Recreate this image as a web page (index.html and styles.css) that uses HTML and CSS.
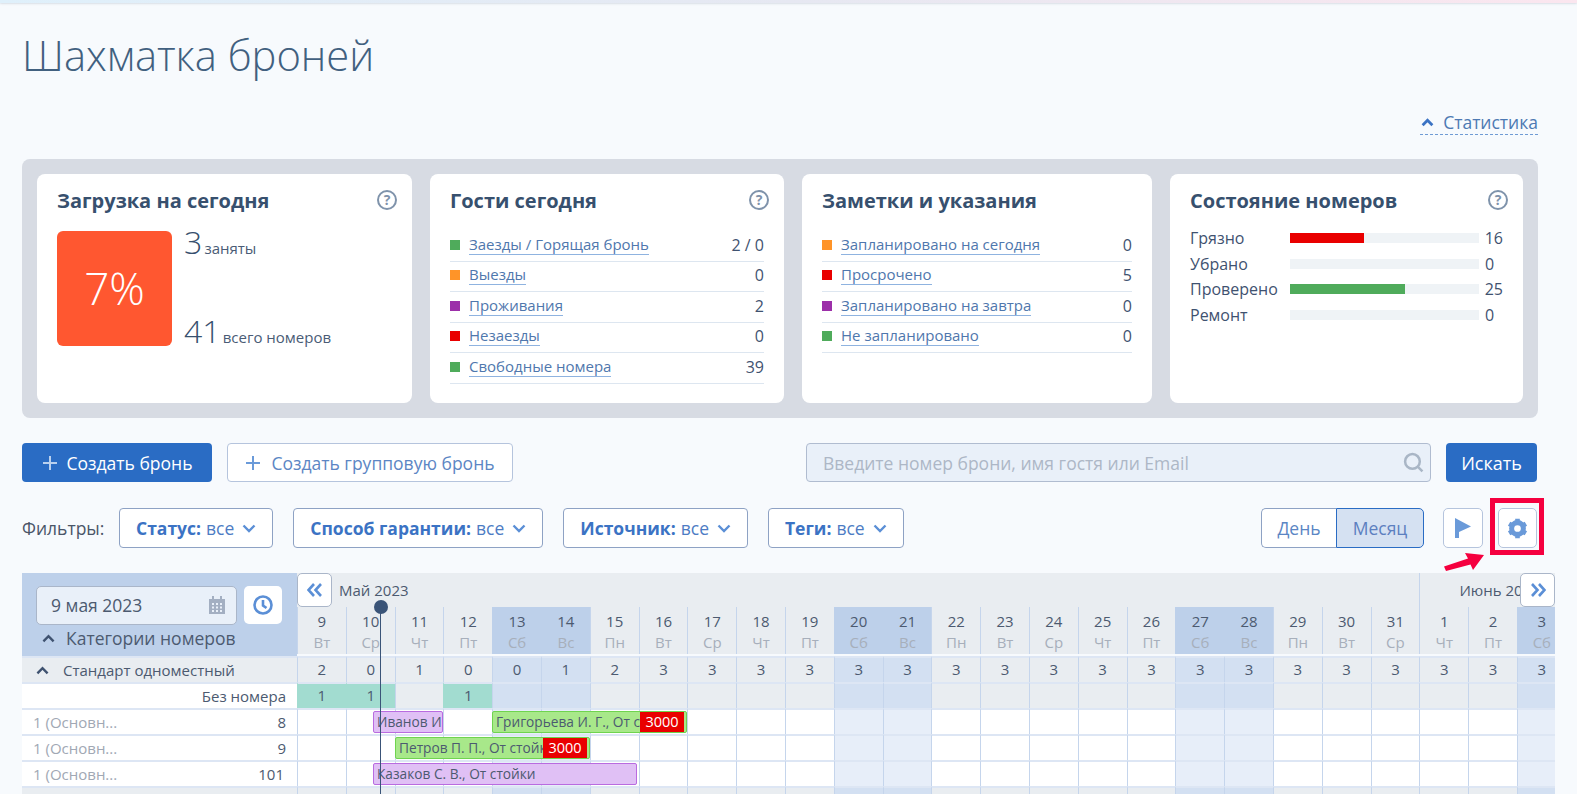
FILE: index.html
```html
<!DOCTYPE html>
<html lang="ru">
<head>
    <meta charset="UTF-8">
    <title>Шахматка броней</title>
    <link rel="stylesheet" href="styles.css">
</head>
<body>
    <div class="top-strip"></div>
    <div class="page">
        <h1 class="title">Шахматка броней</h1>

        <div class="stats-toggle">
            <a class="stats-link">
                <svg class="chev-up" viewBox="0 0 12 8"><polyline points="1.5,6.5 6,2 10.5,6.5"/></svg>
                Статистика
            </a>
        </div>

        <div class="stats">
            <section class="card card-load">
                <h3>Загрузка на сегодня <span class="help">?</span></h3>
                <div class="load">
                    <div class="load-box">7%</div>
                    <div class="load-nums">
                        <div><span class="big">3</span> <span class="small">заняты</span></div>
                        <div><span class="big">41</span> <span class="small">всего номеров</span></div>
                    </div>
                </div>
            </section>

            <section class="card card-guests">
                <h3>Гости сегодня <span class="help">?</span></h3>
                <ul class="list">
                    <li><i class="sq green"></i><a>Заезды / Горящая бронь</a><b>2 / 0</b></li>
                    <li><i class="sq orange"></i><a>Выезды</a><b>0</b></li>
                    <li><i class="sq purple"></i><a>Проживания</a><b>2</b></li>
                    <li><i class="sq red"></i><a>Незаезды</a><b>0</b></li>
                    <li><i class="sq green"></i><a>Свободные номера</a><b>39</b></li>
                </ul>
            </section>

            <section class="card card-notes">
                <h3>Заметки и указания</h3>
                <ul class="list">
                    <li><i class="sq orange"></i><a>Запланировано на сегодня</a><b>0</b></li>
                    <li><i class="sq red"></i><a>Просрочено</a><b>5</b></li>
                    <li><i class="sq purple"></i><a>Запланировано на завтра</a><b>0</b></li>
                    <li><i class="sq green"></i><a>Не запланировано</a><b>0</b></li>
                </ul>
            </section>

            <section class="card card-rooms">
                <h3>Состояние номеров <span class="help">?</span></h3>
                <div class="states">
                    <div class="state"><span class="state-name">Грязно</span><div class="bar"><div class="fill red" style="width: 39%"></div></div><span class="state-val">16</span></div>
                    <div class="state"><span class="state-name">Убрано</span><div class="bar"></div><span class="state-val">0</span></div>
                    <div class="state"><span class="state-name">Проверено</span><div class="bar"><div class="fill green" style="width: 61%"></div></div><span class="state-val">25</span></div>
                    <div class="state"><span class="state-name">Ремонт</span><div class="bar"></div><span class="state-val">0</span></div>
                </div>
            </section>
        </div>

        <div class="actions">
            <button class="btn btn-primary btn-create">
                <svg class="plus" viewBox="0 0 16 16"><path d="M8 1v14M1 8h14"/></svg>
                Создать бронь
            </button>
            <button class="btn btn-outline">
                <svg class="plus" viewBox="0 0 16 16"><path d="M8 1v14M1 8h14"/></svg>
                Создать групповую бронь
            </button>
            <div class="search">
                <span class="search-text">Введите номер брони, имя гостя или Email</span>
                <svg class="search-icon" viewBox="0 0 20 20"><circle cx="9" cy="9" r="7"/><path d="M14 14l4.5 4.5"/></svg>
            </div>
            <button class="btn btn-primary btn-find">Искать</button>
        </div>

        <div class="filters">
            <span class="filters-label">Фильтры:</span>
            <button class="filter"><b>Статус:</b> все <svg class="chev-down" viewBox="0 0 14 9"><polyline points="1.5,1.5 7,7 12.5,1.5"/></svg></button>
            <button class="filter"><b>Способ гарантии:</b> все <svg class="chev-down" viewBox="0 0 14 9"><polyline points="1.5,1.5 7,7 12.5,1.5"/></svg></button>
            <button class="filter"><b>Источник:</b> все <svg class="chev-down" viewBox="0 0 14 9"><polyline points="1.5,1.5 7,7 12.5,1.5"/></svg></button>
            <button class="filter"><b>Теги:</b> все <svg class="chev-down" viewBox="0 0 14 9"><polyline points="1.5,1.5 7,7 12.5,1.5"/></svg></button>

            <div class="filters-right">
                <div class="switch">
                    <span class="switch-item">День</span>
                    <span class="switch-item active">Месяц</span>
                </div>
                <button class="icon-btn flag-btn">
                    <svg viewBox="0 0 16 20" width="16" height="20"><path class="flag" d="M0 0L16 8.5L4 14V20H0Z"/></svg>
                </button>
                <button class="icon-btn gear-btn">
                    <svg viewBox="0 0 20 20" width="21" height="21">
                        <circle class="gear-ring" cx="10" cy="10" r="5.6"/>
                        <path class="gear-teeth" d="M10 0.8v3.5M10 15.7v3.500M2 5.400l3 1.750M15 12.850l3 1.750M2 14.600l3-1.750M15 7.150l3-1.750"/>
                    </svg>
                </button>
                <div class="highlight-box"></div>
                <svg class="arrow" viewBox="0 0 40 18" width="40" height="18"><path d="M0 13.5L24 5.5L21 0L40 2L29 17L26.5 11.5L2 18Z"/></svg>
            </div>
        </div>

        <div class="board">
            <div class="board-head">
                <div class="head-left">
                    <div class="date-row">
                        <div class="date-input">
                            9 мая 2023
                            <svg class="cal" viewBox="0 0 18 18" width="18" height="18">
                                <path d="M1 3h16v15H1zM4 0h2v4H4zM12 0h2v4h-2z"/>
                                <path class="cal-holes" d="M4 7h2v2H4zM8 7h2v2H8zM12 7h2v2h-2zM4 10.500h2v2H4zM8 10.500h2v2H8zM12 10.500h2v2h-2zM4 14h2v2H4zM8 14h2v2H8zM12 14h2v2h-2z"/>
                            </svg>
                        </div>
                        <button class="clock-btn">
                            <svg viewBox="0 0 20 20" width="20" height="20"><circle cx="10" cy="10" r="8.500"/><path d="M10 5v5.500l3.500 2.500"/></svg>
                        </button>
                    </div>
                    <div class="cat-title">
                        <svg class="chev-dark" viewBox="0 0 14 9"><polyline points="1.5,7.500 7,2 12.500,7.500"/></svg>
                        Категории номеров
                    </div>
                </div>
                <div class="head-right">
                    <div class="months">
                        <div class="month month-may">
                            <button class="nav-btn">
                                <svg viewBox="0 0 16 14" width="16" height="14"><path d="M7 1L1.500 7L7 13M14 1L8.500 7L14 13"/></svg>
                            </button>
                            Май 2023
                        </div>
                        <div class="month month-june">Июнь 2023</div>
                    </div>
                    <div class="row days">
                        <div class="day">9<small>Вт</small></div>
                        <div class="day">10<small>Ср</small></div>
                        <div class="day">11<small>Чт</small></div>
                        <div class="day">12<small>Пт</small></div>
                        <div class="day we">13<small>Сб</small></div>
                        <div class="day we">14<small>Вс</small></div>
                        <div class="day">15<small>Пн</small></div>
                        <div class="day">16<small>Вт</small></div>
                        <div class="day">17<small>Ср</small></div>
                        <div class="day">18<small>Чт</small></div>
                        <div class="day">19<small>Пт</small></div>
                        <div class="day we">20<small>Сб</small></div>
                        <div class="day we">21<small>Вс</small></div>
                        <div class="day">22<small>Пн</small></div>
                        <div class="day">23<small>Вт</small></div>
                        <div class="day">24<small>Ср</small></div>
                        <div class="day">25<small>Чт</small></div>
                        <div class="day">26<small>Пт</small></div>
                        <div class="day we">27<small>Сб</small></div>
                        <div class="day we">28<small>Вс</small></div>
                        <div class="day">29<small>Пн</small></div>
                        <div class="day">30<small>Вт</small></div>
                        <div class="day">31<small>Ср</small></div>
                        <div class="day">1<small>Чт</small></div>
                        <div class="day">2<small>Пт</small></div>
                        <div class="day we">3<small>Сб</small></div>
                    </div>
                </div>
            </div>

            <div class="row grey">
                <div class="side side-cat">
                    <svg class="chev-dark" viewBox="0 0 14 9"><polyline points="1.500,7.500 7,2 12.500,7.500"/></svg>
                    Стандарт одноместный
                </div>
                <div class="cell">2</div><div class="cell">0</div><div class="cell">1</div><div class="cell">0</div>
                <div class="cell we">0</div><div class="cell we">1</div><div class="cell">2</div><div class="cell">3</div>
                <div class="cell">3</div><div class="cell">3</div><div class="cell">3</div><div class="cell we">3</div>
                <div class="cell we">3</div><div class="cell">3</div><div class="cell">3</div><div class="cell">3</div>
                <div class="cell">3</div><div class="cell">3</div><div class="cell we">3</div><div class="cell we">3</div>
                <div class="cell">3</div><div class="cell">3</div><div class="cell">3</div><div class="cell">3</div>
                <div class="cell">3</div><div class="cell we">3</div>
            </div>

            <div class="row grey">
                <div class="side side-none">Без номера</div>
                <div class="cell free">1</div><div class="cell free">1</div><div class="cell"></div><div class="cell free">1</div>
                <div class="cell we"></div><div class="cell we"></div><div class="cell"></div><div class="cell"></div>
                <div class="cell"></div><div class="cell"></div><div class="cell"></div><div class="cell we"></div>
                <div class="cell we"></div><div class="cell"></div><div class="cell"></div><div class="cell"></div>
                <div class="cell"></div><div class="cell"></div><div class="cell we"></div><div class="cell we"></div>
                <div class="cell"></div><div class="cell"></div><div class="cell"></div><div class="cell"></div>
                <div class="cell"></div><div class="cell we"></div>
            </div>

            <div class="row room">
                <div class="side side-room"><span class="room-type">1 (Основн...</span><span>8</span></div>
                <div class="cell"></div><div class="cell"></div><div class="cell"></div><div class="cell"></div>
                <div class="cell we"></div><div class="cell we"></div><div class="cell"></div><div class="cell"></div>
                <div class="cell"></div><div class="cell"></div><div class="cell"></div><div class="cell we"></div>
                <div class="cell we"></div><div class="cell"></div><div class="cell"></div><div class="cell"></div>
                <div class="cell"></div><div class="cell"></div><div class="cell we"></div><div class="cell we"></div>
                <div class="cell"></div><div class="cell"></div><div class="cell"></div><div class="cell"></div>
                <div class="cell"></div><div class="cell we"></div>
                <div class="booking purple-b b-ivanov"><span class="guest">Иванов И. И., От стойки</span></div>
                <div class="booking green-b b-grig"><span class="guest">Григорьева И. Г., От стойки</span><span class="debt">3000</span></div>
            </div>

            <div class="row room">
                <div class="side side-room"><span class="room-type">1 (Основн...</span><span>9</span></div>
                <div class="cell"></div><div class="cell"></div><div class="cell"></div><div class="cell"></div>
                <div class="cell we"></div><div class="cell we"></div><div class="cell"></div><div class="cell"></div>
                <div class="cell"></div><div class="cell"></div><div class="cell"></div><div class="cell we"></div>
                <div class="cell we"></div><div class="cell"></div><div class="cell"></div><div class="cell"></div>
                <div class="cell"></div><div class="cell"></div><div class="cell we"></div><div class="cell we"></div>
                <div class="cell"></div><div class="cell"></div><div class="cell"></div><div class="cell"></div>
                <div class="cell"></div><div class="cell we"></div>
                <div class="booking green-b b-petrov"><span class="guest">Петров П. П., От стойки</span><span class="debt">3000</span></div>
            </div>

            <div class="row room">
                <div class="side side-room"><span class="room-type">1 (Основн...</span><span class="room-wide">101</span></div>
                <div class="cell"></div><div class="cell"></div><div class="cell"></div><div class="cell"></div>
                <div class="cell we"></div><div class="cell we"></div><div class="cell"></div><div class="cell"></div>
                <div class="cell"></div><div class="cell"></div><div class="cell"></div><div class="cell we"></div>
                <div class="cell we"></div><div class="cell"></div><div class="cell"></div><div class="cell"></div>
                <div class="cell"></div><div class="cell"></div><div class="cell we"></div><div class="cell we"></div>
                <div class="cell"></div><div class="cell"></div><div class="cell"></div><div class="cell"></div>
                <div class="cell"></div><div class="cell we"></div>
                <div class="booking purple-b b-kazakov"><span class="guest">Казаков С. В., От стойки</span></div>
            </div>

            <div class="row grey">
                <div class="side"></div>
                <div class="cell"></div><div class="cell"></div><div class="cell"></div><div class="cell"></div>
                <div class="cell we"></div><div class="cell we"></div><div class="cell"></div><div class="cell"></div>
                <div class="cell"></div><div class="cell"></div><div class="cell"></div><div class="cell we"></div>
                <div class="cell we"></div><div class="cell"></div><div class="cell"></div><div class="cell"></div>
                <div class="cell"></div><div class="cell"></div><div class="cell we"></div><div class="cell we"></div>
                <div class="cell"></div><div class="cell"></div><div class="cell"></div><div class="cell"></div>
                <div class="cell"></div><div class="cell we"></div>
            </div>

            <button class="nav-btn nav-next">
                <svg viewBox="0 0 16 14" width="16" height="14"><path d="M2 1L7.500 7L2 13M9 1L14.500 7L9 13"/></svg>
            </button>
            <div class="now-line"></div>
        </div>
    </div>
</body>
</html>
```

FILE: styles.css
```css
html, body {
    margin: 0;
    height: 794px;
    overflow: hidden;
}

body {
    font-family: "Open Sans", sans-serif;
    background: #f7fafd;
    color: #3f5270;
}

.top-strip {
    height: 3px;
    background: linear-gradient(90deg, #dff0fb, #e6e8f2 50%, #fbe6ef);
    box-shadow: 0 1px 2px rgba(60, 80, 110, 0.15);
}

.page {
    padding: 0 39px 0 22px;
}

button {
    font-family: inherit;
    cursor: pointer;
}

.title {
    margin: 0;
    padding-top: 24px;
    height: 58px;
    font-size: 41.700px;
    line-height: 56px;
    font-weight: 300;
    color: #41607f;
}

.stats-toggle {
    display: flex;
    justify-content: flex-end;
    margin-top: 25px;
    height: 49px;
}

.stats-link {
    display: flex;
    align-items: center;
    gap: 9px;
    height: 24px;
    border-bottom: 1px dashed #6f9bd4;
    font-size: 17.500px;
    color: #4d79b3;
}

.chev-up {
    width: 13px;
    height: 9px;
    margin-left: 1px;
}

.chev-up polyline {
    fill: none;
    stroke: #3b73c4;
    stroke-width: 2.600;
}

/* карточки статистики */
.stats {
    display: grid;
    grid-template-columns: 375px 354px 350px 353px;
    gap: 18px;
    height: 229px;
    padding: 15px;
    background: #d7dbe3;
    border-radius: 8px;
}

.card {
    position: relative;
    padding: 0 20px;
    background: #fff;
    border-radius: 8px;
}

.card h3 {
    margin: 0;
    padding-top: 13px;
    height: 27px;
    font-size: 20px;
    line-height: 27px;
    font-weight: 700;
    color: #37506e;
}

.help {
    position: absolute;
    top: 16px;
    right: 15px;
    box-sizing: border-box;
    width: 20px;
    height: 20px;
    border: 2px solid #7f93ab;
    border-radius: 50%;
    font-size: 14px;
    line-height: 16px;
    text-align: center;
    font-weight: 700;
    color: #7f93ab;
}

.load {
    display: flex;
    gap: 13px;
    margin-top: 17px;
}

.load-box {
    width: 115px;
    height: 115px;
    border-radius: 6px;
    background: #ff5730;
    color: #fff;
    font-size: 44px;
    font-weight: 300;
    line-height: 115px;
    text-align: center;
}

.load-nums {
    display: flex;
    flex-direction: column;
    justify-content: space-between;
    height: 115px;
    margin-top: -4px;
    margin-left: -1px;
}

.load-nums div:last-child {
    margin-bottom: -6px;
}

.big {
    font-size: 32px;
    line-height: 30px;
    font-weight: 300;
    color: #37506e;
}

.small {
    margin-left: -2px;
    font-size: 15px;
    color: #4a5c76;
}

.list {
    margin: 17px 0 0;
    padding: 0;
    list-style: none;
}

.list li {
    display: flex;
    align-items: center;
    box-sizing: border-box;
    height: 30.500px;
    padding-bottom: 2px;
    border-bottom: 1px solid #dde6f0;
}

.sq {
    width: 10px;
    height: 10px;
    margin-right: 9px;
}

.green { background: #4fab5b; }
.orange { background: #ff9428; }
.purple { background: #9c2fa9; }
.red { background: #e90000; }

.list a {
    font-size: 15px;
    line-height: 19px;
    color: #4f77ad;
    border-bottom: 1px solid #8fb3e0;
}

.list b {
    margin-left: auto;
    font-size: 16px;
    font-weight: 400;
    color: #3f5270;
}

.states {
    margin-top: 11px;
}

.state {
    display: flex;
    align-items: center;
    height: 25.700px;
}

.state-name {
    width: 100px;
    font-size: 16px;
    color: #3f5270;
}

.bar {
    width: 189px;
    height: 10px;
    background: #eff3f6;
}

.fill {
    height: 10px;
}

.state-val {
    margin-left: 6px;
    font-size: 16px;
}

/* кнопки и поиск */
.actions {
    display: flex;
    margin-top: 25px;
    height: 39px;
}

.btn {
    display: flex;
    align-items: center;
    justify-content: center;
    height: 39px;
    border-radius: 4px;
    font-size: 17.500px;
}

.btn-primary {
    background: #2a6cc4;
    border: 0;
    color: #fff;
}

.btn-create {
    width: 190px;
    gap: 9px;
    padding-left: 6px;
}

.btn-create .plus {
    stroke: #b9d0ee;
}

.btn-outline {
    width: 286px;
    margin-left: 15px;
    gap: 10px;
    padding-left: 6px;
    background: #fff;
    border: 1px solid #b5c4dd;
    color: #5c86c4;
}

.plus {
    width: 16px;
    height: 16px;
    fill: none;
    stroke: #6a9ad9;
    stroke-width: 2;
}

.search {
    display: flex;
    align-items: center;
    justify-content: space-between;
    box-sizing: border-box;
    width: 625px;
    margin-left: 293px;
    padding: 0 6px 0 16px;
    background: #e9f0f9;
    border: 1px solid #b0bcd0;
    border-radius: 4px;
}

.search-text {
    font-size: 17.500px;
    color: #adb7c6;
}

.search-icon {
    width: 21px;
    height: 21px;
    fill: none;
    stroke: #a9b6c6;
    stroke-width: 2.400;
}

.btn-find {
    width: 91px;
    margin-left: 15px;
    font-size: 18px;
}

/* фильтры */
.filters {
    position: relative;
    display: flex;
    align-items: center;
    margin-top: 26px;
    height: 40px;
}

.filters-label {
    width: 97px;
    font-size: 17.500px;
    color: #4a5568;
}

.filter {
    display: flex;
    align-items: center;
    justify-content: center;
    gap: 5px;
    box-sizing: border-box;
    height: 40px;
    padding: 0 16px;
    margin-right: 20px;
    background: #fff;
    border: 1px solid #8ea2c4;
    border-radius: 4px;
    font-size: 17.500px;
    color: #4d7cc4;
}

.filter b {
    font-weight: 700;
    color: #3b73c4;
}

.chev-down {
    width: 14px;
    height: 9px;
    margin-left: 3px;
}

.chev-down polyline {
    fill: none;
    stroke: #5b8fd6;
    stroke-width: 2.400;
}

.filters-right {
    display: flex;
    margin-left: auto;
    margin-right: 1px;
    position: relative;
}

.switch {
    display: flex;
    width: 163px;
    height: 40px;
    box-sizing: border-box;
    margin-right: 19px;
}

.switch-item {
    display: flex;
    align-items: center;
    justify-content: center;
    box-sizing: border-box;
    width: 75px;
    background: #fff;
    border: 1px solid #8ea2c4;
    border-right: 0;
    border-radius: 5px 0 0 5px;
    font-size: 17.500px;
    color: #5b86c4;
}

.switch-item.active {
    width: 88px;
    background: #d5e1f2;
    border: 1px solid #2a6cc4;
    border-radius: 0 5px 5px 0;
    color: #5c7fc0;
}

.icon-btn {
    display: flex;
    align-items: center;
    justify-content: center;
    box-sizing: border-box;
    height: 40px;
    width: 40px;
    padding: 0;
    background: #fff;
    border: 1px solid #b5c4dd;
    border-radius: 5px;
}

.gear-btn {
    margin-left: 15px;
    width: 39px;
}

.flag { fill: #6a9ad9; }

.gear-ring {
    fill: none;
    stroke: #6a9ad9;
    stroke-width: 4.800;
}

.gear-teeth {
    fill: none;
    stroke: #6a9ad9;
    stroke-width: 4.400;
}

.highlight-box {
    position: absolute;
    right: -7px;
    top: -10px;
    box-sizing: border-box;
    width: 54px;
    height: 57px;
    border: 5px solid #f5003f;
}

.arrow {
    position: absolute;
    right: 53px;
    top: 45px;
    fill: #f5003f;
}

/* шахматка */
.board {
    position: relative;
    width: 1533px;
    height: 221px;
    margin-top: 25px;
    overflow: hidden;
    color: #4c5a70;
}

.board-head {
    display: flex;
    height: 83px;
}

.head-left {
    flex: 0 0 275px;
    box-sizing: border-box;
    padding: 13px 0 0 14px;
    background: #bdd0ea;
}

.date-row {
    display: flex;
    gap: 7px;
}

.date-input {
    display: flex;
    align-items: center;
    justify-content: space-between;
    box-sizing: border-box;
    width: 201px;
    height: 39px;
    padding: 0 10px 2px 14px;
    background: #e9f0f9;
    border: 1px solid #aab6c9;
    border-radius: 5px;
    font-size: 17.500px;
    color: #4c5a70;
}

.cal { fill: #a3afc2; }
.cal-holes { fill: #e9f0f9; }

.clock-btn {
    display: flex;
    align-items: center;
    justify-content: center;
    width: 38px;
    height: 38px;
    padding: 0;
    background: #fff;
    border: 0;
    border-radius: 5px;
}

.clock-btn svg {
    fill: none;
    stroke: #5b8fd6;
    stroke-width: 2.600;
}

.cat-title {
    display: flex;
    align-items: center;
    gap: 11px;
    margin: 1px 0 0 6px;
    font-size: 17.500px;
    line-height: 24px;
    color: #4c5a70;
}

.chev-dark {
    flex: none;
    width: 13px;
    height: 9px;
}

.chev-dark polyline {
    fill: none;
    stroke: #3f5270;
    stroke-width: 2.600;
}

.months {
    display: flex;
    height: 34px;
}

.month {
    display: flex;
    align-items: center;
    box-sizing: border-box;
    height: 34px;
    background: #e9edf1;
    font-size: 15px;
    color: #4c5a70;
}

.month-may {
    flex: 0 0 1122.400px;
    gap: 7px;
}

.month-june {
    flex: none;
    width: 200px;
    padding-left: 39px;
    border-left: 1px solid #c5d5ec;
}

.nav-btn {
    display: flex;
    align-items: center;
    justify-content: center;
    box-sizing: border-box;
    width: 35px;
    height: 34px;
    padding: 0;
    background: #fff;
    border: 1px solid #aab6c9;
    border-radius: 5px;
}

.nav-btn svg {
    fill: none;
    stroke: #5b8fd6;
    stroke-width: 2.600;
}

.nav-next {
    position: absolute;
    top: 0;
    right: 0;
}

.row {
    position: relative;
    display: flex;
    height: 26px;
}

.row.days {
    height: 47px;
    width: 1268.800px;
}

.day {
    flex: 0 0 48.800px;
    box-sizing: border-box;
    height: 47px;
    padding-top: 4px;
    background: #e9edf1;
    border-left: 1px solid #c5d5ec;
    font-size: 15px;
    line-height: 21px;
    text-align: center;
}

.day small {
    display: block;
    font-size: 15px;
    color: #a7afbb;
}

.day.we {
    background: #bdd0ea;
    border-left-color: #bdd0ea;
}

.side {
    flex: 0 0 275px;
    display: flex;
    align-items: center;
    box-sizing: border-box;
    border-top: 2px solid #dde6f4;
    background: #e9edf1;
    font-size: 15px;
}

.side-cat {
    gap: 14px;
    padding-left: 14px;
}

.side-none {
    justify-content: flex-end;
    padding-right: 11px;
    background: #fff;
}

.side-room {
    justify-content: space-between;
    padding: 0 11px;
    background: #fff;
}

.room-type {
    color: #a1a8b4;
}

.room-wide {
    margin-right: 2px;
}

.cell {
    flex: 0 0 48.800px;
    box-sizing: border-box;
    border-left: 1px solid #c5d5ec;
    border-top: 2px solid #dde6f4;
    font-size: 15px;
    line-height: 23px;
    text-align: center;
}

.grey .cell {
    background: #e9edf1;
}

.grey .cell.we {
    background: #d3e0f2;
}

.grey .cell.free {
    background: #a2dcd0;
    border-left-color: #a2dcd0;
}

.room .cell {
    background: #fff;
}

.room .cell.we {
    background: #e7eef9;
}

.booking {
    position: absolute;
    top: 3px;
    display: flex;
    box-sizing: border-box;
    height: 22px;
    padding-left: 3px;
    border-radius: 2px;
    font-size: 13.700px;
    line-height: 19px;
    white-space: nowrap;
    color: #4c5a70;
}

.guest {
    flex: 1;
    min-width: 0;
    overflow: hidden;
}

.purple-b {
    background: #e0c0f5;
    border: 1px solid #b96be0;
}

.green-b {
    padding-right: 2px;
    background: #a8e88a;
    border: 1px solid #6fd44f;
}

.debt {
    flex: none;
    width: 44px;
    height: 20px;
    background: #e90000;
    color: #fff;
    font-size: 14.500px;
    text-align: center;
}

.b-ivanov { left: 351px; width: 70px; }
.b-grig { left: 470px; width: 195px; }
.b-petrov { left: 373px; width: 195px; }
.b-kazakov { left: 351px; width: 264px; }

.now-line {
    position: absolute;
    left: 357.500px;
    top: 34px;
    bottom: 0;
    width: 1.500px;
    background: #3a5478;
}

.now-line::before {
    content: "";
    position: absolute;
    left: -6px;
    top: -7px;
    width: 14px;
    height: 14px;
    border-radius: 50%;
    background: #3a5478;
}
```
